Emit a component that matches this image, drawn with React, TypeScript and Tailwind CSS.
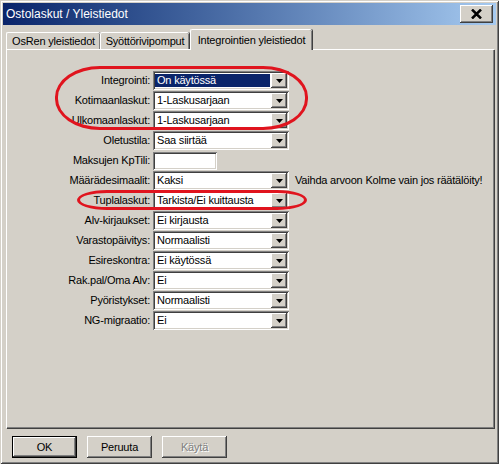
import React from "react";

type Row = { label: string; value?: string; focus?: boolean; input?: boolean; note?: string };

const rows: Row[] = [
  { label: "Integrointi:", value: "On käytössä", focus: true },
  { label: "Kotimaanlaskut:", value: "1-Laskusarjaan" },
  { label: "Ulkomaanlaskut:", value: "1-Laskusarjaan" },
  { label: "Oletustila:", value: "Saa siirtää" },
  { label: "Maksujen KpTili:", input: true },
  { label: "Määrädesimaalit:", value: "Kaksi", note: "Vaihda arvoon Kolme vain jos räätälöity!" },
  { label: "Tuplalaskut:", value: "Tarkista/Ei kuittausta" },
  { label: "Alv-kirjaukset:", value: "Ei kirjausta" },
  { label: "Varastopäivitys:", value: "Normaalisti" },
  { label: "Esireskontra:", value: "Ei käytössä" },
  { label: "Rak.pal/Oma Alv:", value: "Ei" },
  { label: "Pyöristykset:", value: "Normaalisti" },
  { label: "NG-migraatio:", value: "Ei" },
];

const sunken =
  "shadow-[inset_1px_1px_0_#808080,inset_-1px_-1px_0_#ffffff,inset_2px_2px_0_#404040,inset_-2px_-2px_0_#d4d0c8]";
const raised =
  "shadow-[inset_-1px_-1px_0_#404040,inset_1px_1px_0_#ffffff,inset_-2px_-2px_0_#808080]";

function Arrow() {
  return (
    <svg width="7" height="4" viewBox="0 0 7 4">
      <polygon points="0,0 7,0 3.5,4" fill="#000" />
    </svg>
  );
}

function Combo({ value, focus }: { value: string; focus?: boolean }) {
  return (
    <div className={`flex h-[19px] w-[136px] bg-white p-[2px] ${sunken}`}>
      <div className="flex flex-1 items-stretch pr-[1px]">
        <div
          className={`flex flex-1 items-center px-[2px] my-[1px] ${
            focus ? "bg-[#0a246a] text-white" : "text-black"
          }`}
        >
          {value}
        </div>
      </div>
      <div className={`flex w-[16px] items-center justify-center bg-[#d4d0c8] ${raised}`}>
        <Arrow />
      </div>
    </div>
  );
}

function Button({ label, primary, disabled }: { label: string; primary?: boolean; disabled?: boolean }) {
  return (
    <div
      className={`flex h-[22px] w-[65px] items-center justify-center bg-[#d4d0c8] ${
        primary
          ? "border border-black shadow-[inset_-1px_-1px_0_#404040,inset_1px_1px_0_#ffffff,inset_-2px_-2px_0_#808080]"
          : raised
      } ${disabled ? "text-[#808080] [text-shadow:1px_1px_0_#ffffff]" : "text-black"}`}
    >
      {label}
    </div>
  );
}

export default function App() {
  return (
    <div
      className="relative h-[464px] w-[499px] overflow-hidden bg-[#d4d0c8] text-[11px] tracking-[-0.2px] text-black shadow-[inset_1px_1px_0_#d4d0c8,inset_-1px_-1px_0_#404040,inset_2px_2px_0_#ffffff,inset_-2px_-2px_0_#808080]"
      style={{ fontFamily: '"Liberation Sans", Arial, sans-serif' }}
    >
      {/* title bar */}
      <div className="mx-[3px] mt-[3px] flex h-[22px] items-center justify-between bg-linear-to-r from-[#0a246a] to-[#a6caf0] pl-[3px] pr-[3px]">
        <span className="text-[12px] tracking-normal text-white">Ostolaskut / Yleistiedot</span>
        <div className={`flex h-[18px] w-[33px] items-center justify-center bg-[#d4d0c8] ${raised}`}>
          <svg width="11" height="10" viewBox="0 0 11 10">
            <path d="M1 0.5 L10 9.5 M10 0.5 L1 9.5" stroke="#000" strokeWidth="2.5" />
          </svg>
        </div>
      </div>

      {/* tabs */}
      <div className="ml-[6px] mt-[4px] flex h-[20px] items-end">
        <div className="flex h-[17px] w-[94px] items-center justify-center rounded-t-[2px] border-l border-t border-white shadow-[inset_-1px_0_0_#808080,1px_0_0_#404040]">
          OsRen yleistiedot
        </div>
        <div className="flex h-[17px] w-[89px] items-center justify-center rounded-t-[2px] border-l border-t border-white shadow-[inset_-1px_0_0_#808080,1px_0_0_#404040]">
          Syöttörivipomput
        </div>
        <div className="relative z-10 -mb-[1px] ml-[1px] flex h-[21px] w-[122px] items-start justify-center rounded-t-[2px] border-l border-t border-white bg-[#d4d0c8] pt-[2px] shadow-[inset_-1px_0_0_#808080,1px_0_0_#404040]">
          Integrointien yleistiedot
        </div>
      </div>

      {/* panel */}
      <div className="ml-[6px] h-[379px] w-[488px] border-l border-t border-white shadow-[inset_-1px_-1px_0_#808080,1px_1px_0_#404040]">
        <div className="flex flex-col pt-[21px]">
          {rows.map((r) => (
            <div key={r.label} className="mb-[1px] flex h-[19px] items-center">
              <div className="w-[146px] pr-[3px] text-right">{r.label}</div>
              {r.input ? (
                <div className={`h-[18px] w-[64px] bg-white ${sunken}`} />
              ) : (
                <Combo value={r.value ?? ""} focus={r.focus} />
              )}
              {r.note && <span className="ml-[6px]">{r.note}</span>}
            </div>
          ))}
        </div>
      </div>

      {/* buttons */}
      <div className="ml-[12px] mt-[8px] flex gap-[10px]">
        <Button label="OK" primary />
        <Button label="Peruuta" />
        <Button label="Käytä" disabled />
      </div>

      {/* red highlight marks */}
      <div className="pointer-events-none absolute left-[55px] top-[66px] h-[64px] w-[253px] rounded-[45px/31px] border-[3px] border-[#e0141e]" />
      <div className="pointer-events-none absolute left-[77px] top-[190px] h-[20px] w-[230px] rounded-[30px/10px] border-[3px] border-[#e0141e]" />
    </div>
  );
}
